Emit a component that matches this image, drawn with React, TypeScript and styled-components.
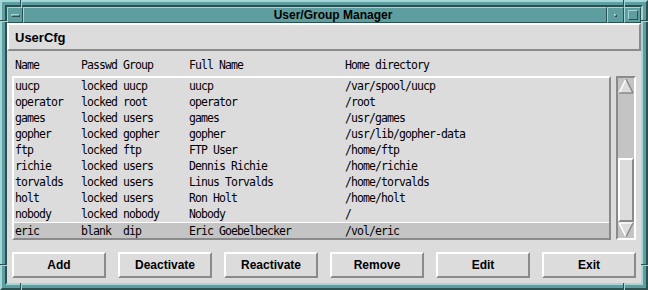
import React from "react";
import styled, { createGlobalStyle } from "styled-components";

const teal = "#5f9ea0";
const tealLight = "#a3d6d6";
const tealDark = "#2c5050";
const face = "#dcdcdc";
const trough = "#c4c4c4";
const shade = "#8a8a8a";

const GlobalStyle = createGlobalStyle`
    html, body {
        margin: 0;
        padding: 0;
        background: ${teal};
    }
    * {
        box-sizing: border-box;
    }
`;

interface IUser {
    name: string;
    passwd: string;
    group: string;
    fullName: string;
    home: string;
}

const users: IUser[] = [
    { name: "uucp", passwd: "locked", group: "uucp", fullName: "uucp", home: "/var/spool/uucp" },
    { name: "operator", passwd: "locked", group: "root", fullName: "operator", home: "/root" },
    { name: "games", passwd: "locked", group: "users", fullName: "games", home: "/usr/games" },
    { name: "gopher", passwd: "locked", group: "gopher", fullName: "gopher", home: "/usr/lib/gopher-data" },
    { name: "ftp", passwd: "locked", group: "ftp", fullName: "FTP User", home: "/home/ftp" },
    { name: "richie", passwd: "locked", group: "users", fullName: "Dennis Richie", home: "/home/richie" },
    { name: "torvalds", passwd: "locked", group: "users", fullName: "Linus Torvalds", home: "/home/torvalds" },
    { name: "holt", passwd: "locked", group: "users", fullName: "Ron Holt", home: "/home/holt" },
    { name: "nobody", passwd: "locked", group: "nobody", fullName: "Nobody", home: "/" },
    { name: "eric", passwd: "blank", group: "dip", fullName: "Eric Goebelbecker", home: "/vol/eric" },
];

const buttons = ["Add", "Deactivate", "Reactivate", "Remove", "Edit", "Exit"];

const Window = styled.div`
    position: relative;
    display: flex;
    flex-direction: column;
    width: 648px;
    height: 290px;
    padding: 3px;
    background: ${teal};
    border: 2px solid;
    border-color: ${tealLight} ${tealDark} ${tealDark} ${tealLight};
`;

const Frame = styled.div`
    display: flex;
    flex-direction: column;
    flex: 1;
    min-height: 0;
    border: 2px solid;
    border-color: ${tealDark} ${tealLight} ${tealLight} ${tealDark};
`;

const CornerMark = styled.div<{ $vertical?: boolean }>`
    position: absolute;
    width: ${({ $vertical }) => ($vertical ? "2px" : "7px")};
    height: ${({ $vertical }) => ($vertical ? "7px" : "2px")};
    border-style: solid;
    border-color: ${tealDark} ${tealLight} ${tealLight} ${tealDark};
    border-width: ${({ $vertical }) => ($vertical ? "0 1px 0 1px" : "1px 0 1px 0")};
`;

const TitleBar = styled.div`
    display: flex;
    height: 16px;
    flex-shrink: 0;
`;

const TitleButton = styled.div<{ $w: number }>`
    display: flex;
    align-items: center;
    justify-content: center;
    width: ${({ $w }) => $w}px;
    height: 16px;
    background: ${teal};
    border: 1px solid;
    border-color: ${tealLight} ${tealDark} ${tealDark} ${tealLight};
`;

const MenuBar = styled.div`
    width: 9px;
    height: 3px;
    border: 1px solid;
    border-color: ${tealLight} ${tealDark} ${tealDark} ${tealLight};
`;

const MinDot = styled.div`
    width: 3px;
    height: 3px;
    border: 1px solid;
    border-color: ${tealLight} ${tealDark} ${tealDark} ${tealLight};
`;

const MaxBox = styled.div`
    width: 10px;
    height: 10px;
    border: 1px solid;
    border-color: ${tealLight} ${tealDark} ${tealDark} ${tealLight};
`;

const TitleText = styled.div`
    flex: 1;
    display: flex;
    align-items: center;
    justify-content: center;
    padding-left: 36px;
    height: 16px;
    background: ${teal};
    border: 1px solid;
    border-color: ${tealLight} ${tealDark} ${tealDark} ${tealLight};
    font-family: "Liberation Sans", Arial, sans-serif;
    font-weight: bold;
    font-size: 12px;
    color: #000;
`;

const Body = styled.div`
    display: flex;
    flex-direction: column;
    flex: 1;
    min-height: 0;
    background: ${face};
`;

const Raised = styled.div`
    border: 2px solid;
    border-color: #fff ${shade} ${shade} #fff;
`;

const HeaderPanel = styled(Raised)`
    display: flex;
    align-items: center;
    height: 28px;
    padding-left: 6px;
    font-family: "Liberation Sans", Arial, sans-serif;
    font-weight: bold;
    font-size: 13px;
    color: #000;
`;

const Content = styled.div`
    display: flex;
    flex-direction: column;
    padding: 0 5px;
`;

const mono = `
    font-family: "DejaVu Sans Mono", "Liberation Mono", monospace;
    font-size: 11.5px;
    letter-spacing: -0.92px;
    color: #000;
`;

const Row = styled.div<{ $selected?: boolean }>`
    display: flex;
    align-items: center;
    height: 16px;
    padding-left: 1px;
    white-space: pre;
    ${mono}
    background: ${({ $selected }) => ($selected ? trough : "transparent")};
    border-top: ${({ $selected }) => ($selected ? "1px solid #fff" : "0")};
`;

const HeadRow = styled(Row)`
    height: 25px;
    padding: 7px 0 4px 3px;
`;

const Cell = styled.span<{ $w?: number }>`
    width: ${({ $w }) => ($w ? `${$w}px` : "auto")};
    flex: ${({ $w }) => ($w ? "none" : "1")};
`;

const ListArea = styled.div`
    display: flex;
    gap: 5px;
    height: 164px;
`;

const List = styled(Raised)`
    width: 600px;
    display: flex;
    flex-direction: column;
    overflow: hidden;
`;

const ScrollBar = styled.div`
    display: flex;
    flex-direction: column;
    width: 20px;
    background: ${trough};
    border: 2px solid;
    border-color: ${shade} #fff #fff ${shade};
`;

const Arrow = styled.svg`
    display: block;
    width: 16px;
    height: 16px;
    flex-shrink: 0;
`;

const Track = styled.div`
    flex: 1;
    display: flex;
    flex-direction: column;
    justify-content: flex-end;
`;

const Thumb = styled(Raised)`
    height: 64px;
    background: ${face};
`;

const ButtonRow = styled.div`
    display: flex;
    justify-content: space-between;
    margin-top: 12px;
`;

const Button = styled(Raised)`
    display: flex;
    align-items: center;
    justify-content: center;
    width: 94px;
    height: 26px;
    font-family: "Liberation Sans", Arial, sans-serif;
    font-weight: bold;
    font-size: 12px;
    color: #000;
`;

const cols = [66, 42, 66, 156];

const UpArrow = () => (
    <Arrow viewBox="0 0 16 16">
        <polygon points="8,1 15,15 1,15" fill={face} />
        <line x1="1" y1="15" x2="8" y2="1" stroke="#fff" strokeWidth="1.5" />
        <line x1="8" y1="1" x2="15" y2="15" stroke={shade} strokeWidth="1.5" />
        <line x1="15" y1="15" x2="1" y2="15" stroke={shade} strokeWidth="1.5" />
    </Arrow>
);

const DownArrow = () => (
    <Arrow viewBox="0 0 16 16">
        <polygon points="1,1 15,1 8,15" fill={face} />
        <line x1="1" y1="1" x2="15" y2="1" stroke="#fff" strokeWidth="1.5" />
        <line x1="1" y1="1" x2="8" y2="15" stroke="#fff" strokeWidth="1.5" />
        <line x1="15" y1="1" x2="8" y2="15" stroke={shade} strokeWidth="1.5" />
    </Arrow>
);

export default function App() {
    return (
        <>
            <GlobalStyle />
            <Window>
                <CornerMark $vertical style={{ left: 18, top: -2 }} />
                <CornerMark $vertical style={{ left: 621, top: -2 }} />
                <CornerMark $vertical style={{ left: 18, bottom: -2 }} />
                <CornerMark $vertical style={{ left: 621, bottom: -2 }} />
                <CornerMark style={{ top: 18, left: -2 }} />
                <CornerMark style={{ top: 18, right: -2 }} />
                <CornerMark style={{ top: 262, left: -2 }} />
                <CornerMark style={{ top: 262, right: -2 }} />
                <Frame>
                    <TitleBar>
                        <TitleButton $w={16}>
                            <MenuBar />
                        </TitleButton>
                        <TitleText>User/Group Manager</TitleText>
                        <TitleButton $w={17}>
                            <MinDot />
                        </TitleButton>
                        <TitleButton $w={17}>
                            <MaxBox />
                        </TitleButton>
                    </TitleBar>
                    <Body>
                        <HeaderPanel>UserCfg</HeaderPanel>
                        <Content>
                            <HeadRow>
                                <Cell $w={cols[0]}>Name</Cell>
                                <Cell $w={cols[1]}>Passwd</Cell>
                                <Cell $w={cols[2]}>Group</Cell>
                                <Cell $w={cols[3]}>Full Name</Cell>
                                <Cell>Home directory</Cell>
                            </HeadRow>
                            <ListArea>
                                <List>
                                    {users.map((u, i) => (
                                        <Row key={u.name} $selected={i === users.length - 1}>
                                            <Cell $w={cols[0]}>{u.name}</Cell>
                                            <Cell $w={cols[1]}>{u.passwd}</Cell>
                                            <Cell $w={cols[2]}>{u.group}</Cell>
                                            <Cell $w={cols[3]}>{u.fullName}</Cell>
                                            <Cell>{u.home}</Cell>
                                        </Row>
                                    ))}
                                </List>
                                <ScrollBar>
                                    <UpArrow />
                                    <Track>
                                        <Thumb />
                                    </Track>
                                    <DownArrow />
                                </ScrollBar>
                            </ListArea>
                            <ButtonRow>
                                {buttons.map((b) => (
                                    <Button key={b}>{b}</Button>
                                ))}
                            </ButtonRow>
                        </Content>
                    </Body>
                </Frame>
            </Window>
        </>
    );
}
